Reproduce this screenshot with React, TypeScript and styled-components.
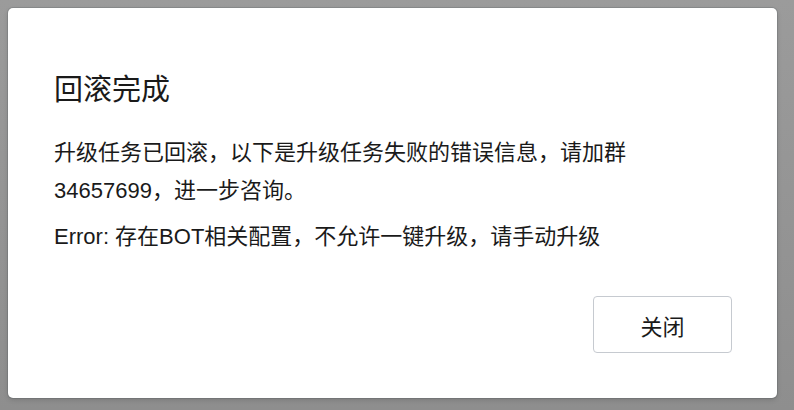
import styled, { createGlobalStyle } from "styled-components";

const GlobalStyle = createGlobalStyle`
    html, body {
        margin: 0;
        height: 100%;
    }
    body {
        background: linear-gradient(#9b9b9b, #8e8e8e);
        padding: 8px;
        box-sizing: border-box;
        font-family: "Liberation Sans", "Noto Sans CJK SC", sans-serif;
        color: #1a1a1a;
    }
`

export default function App() {
    return (
        <>
            <GlobalStyle/>
            <Dialog>
                <Title>回滚完成</Title>
                <Message>升级任务已回滚，以下是升级任务失败的错误信息，请加群34657699，进一步咨询。</Message>
                <ErrorText>Error: 存在BOT相关配置，不允许一键升级，请手动升级</ErrorText>
                <Footer>
                    <CloseButton>关闭</CloseButton>
                </Footer>
            </Dialog>
        </>
    );
}

const Dialog = styled.div`
    width: 769px;
    height: 390px;
    box-sizing: border-box;
    padding: 62px 45px 45px 46px;
    background: #fff;
    border-radius: 5px;
    box-shadow: 0 0 0 1px rgba(60, 70, 80, 0.18), 0 2px 5px rgba(0, 0, 0, 0.15);
    display: flex;
    flex-direction: column;
`

const Title = styled.h2`
    margin: 0;
    font-size: 29px;
    font-weight: 400;
    line-height: 40px;
`

const Message = styled.p`
    margin: 24px 0 0;
    font-size: 22px;
    line-height: 38px;
    max-width: 600px;
`

const ErrorText = styled.p`
    margin: 8px 0 0;
    font-size: 22px;
    line-height: 38px;
`

const Footer = styled.div`
    margin-top: auto;
    display: flex;
    justify-content: flex-end;
`

const CloseButton = styled.button`
    width: 139px;
    height: 57px;
    background: #fff;
    border: 1px solid #c6cad0;
    border-radius: 4px;
    font-family: inherit;
    font-size: 22px;
    color: #1a1a1a;
    cursor: pointer;
`
